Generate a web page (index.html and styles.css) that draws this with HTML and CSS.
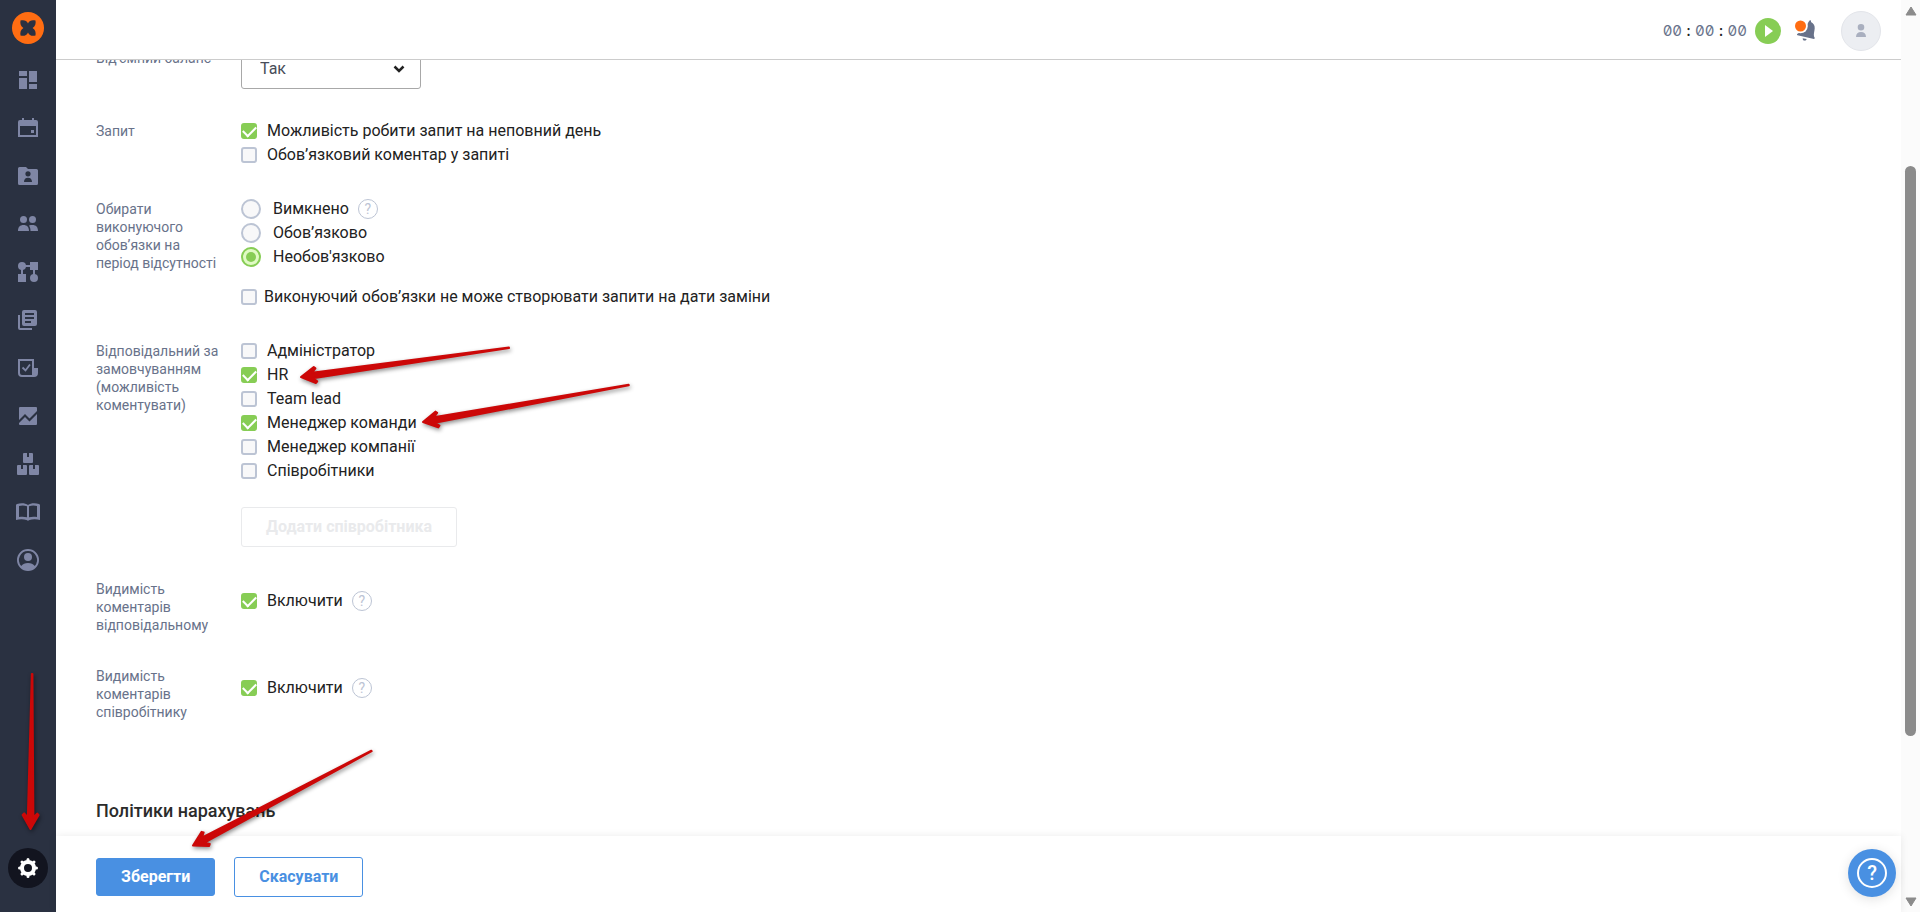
FILE: index.html
```html
<!DOCTYPE html>
<html lang="uk">
<head>
<meta charset="utf-8">
<title>Налаштування політики</title>
<link rel="stylesheet" href="styles.css">
</head>
<body>
<div class="app">
  <nav class="sidebar" aria-label="Головне меню">
    <a class="logo" href="#" aria-label="Головна">
      <svg viewBox="0 0 32 32" width="32" height="32"><circle cx="16" cy="16" r="16" fill="#ff6d12"/><path fill="#2a3141" d="M8.500 8.600C11.500 7.700 14.800 8.300 16 11.600 17.200 8.300 20.500 7.700 23.500 8.600 24 11.600 23.400 14.300 20.600 16 23.400 17.700 24 20.400 23.500 23.400 20.500 24.300 17.200 23.700 16 20.400 14.800 23.700 11.500 24.300 8.500 23.400 8 20.400 8.600 17.700 11.400 16 8.600 14.300 8 11.600 8.500 8.600z"/></svg>
    </a>
    <a class="nav-item" href="#" aria-label="Дашборд"><svg viewBox="0 0 24 24"><path d="M3 3h8v5H3zM3 10h8v11H3zM13 3h8v11h-8zM13 16h8v5h-8z"/></svg></a>
    <a class="nav-item" href="#" aria-label="Календар"><svg viewBox="0 0 24 24"><path fill-rule="evenodd" d="M6 2h2v2h8V2h2v2h2a2 2 0 0 1 2 2v15H2V6a2 2 0 0 1 2-2h2zM4 10v9h16v-9zM15 14h3v3h-3z"/></svg></a>
    <a class="nav-item" href="#" aria-label="Рекрутинг"><svg viewBox="0 0 24 24"><path fill-rule="evenodd" d="M3.500 3H10l2 2h8.500A1.500 1.500 0 0 1 22 6.500v13a1.500 1.500 0 0 1-1.500 1.500h-17A1.500 1.500 0 0 1 2 19.500v-15A1.500 1.500 0 0 1 3.500 3zM12 7.200a2.600 2.600 0 1 0 0 5.200 2.600 2.600 0 0 0 0-5.200zM8 18h8c0-2.700-1.500-4.200-4-4.200s-4 1.500-4 4.200z"/></svg></a>
    <a class="nav-item" href="#" aria-label="Команда"><svg viewBox="0 0 24 24"><circle cx="7.500" cy="7.500" r="3.500"/><circle cx="16.500" cy="7.500" r="3.500"/><path d="M2 19c0-4 2-6 5.500-6s5.500 2 5.500 6zM13 13.500c1-.4 2.500-.5 3.500-.5 3.500 0 5.500 2 5.500 6h-7.500c0-2.200-.5-4-1.500-5.500z"/></svg></a>
    <a class="nav-item" href="#" aria-label="Процеси"><svg viewBox="0 0 24 24"><circle cx="6" cy="6" r="4"/><circle cx="18" cy="18" r="4"/><path d="M14 2h8v8h-8zM2 14h8v8H2zM9 5h6v2H9zM5 9h2v6H5zM17 9h2v6h-2z"/></svg></a>
    <a class="nav-item" href="#" aria-label="Документи"><svg viewBox="0 0 24 24"><path fill-rule="evenodd" d="M8 2h11a2 2 0 0 1 2 2v12a2 2 0 0 1-2 2H8a2 2 0 0 1-2-2V4a2 2 0 0 1 2-2zM9 5v2h9V5zM9 9v2h9V9zM9 13v2h6v-2zM2 7h2v13h12v2H4a2 2 0 0 1-2-2z"/></svg></a>
    <a class="nav-item" href="#" aria-label="Опитування"><svg viewBox="0 0 24 24"><path fill-rule="evenodd" d="M2 3h16v9h4v5a4 4 0 0 1-4 4H6a4 4 0 0 1-4-4zM4 5v12a2 2 0 0 0 2 2h10V5z"/><path fill="none" stroke="#7f86a5" stroke-width="1.800" d="M6.500 11.500l3 3 4.500-6"/></svg></a>
    <a class="nav-item" href="#" aria-label="Звіти"><svg viewBox="0 0 24 24"><path d="M4 3h16a1 1 0 0 1 1 1v3l-7.500 7.500L9 10l-6 6V4a1 1 0 0 1 1-1z"/><path d="M3 19l6-6 4.500 4.500L21 10v10a1 1 0 0 1-1 1H4a1 1 0 0 1-1-1z"/></svg></a>
    <a class="nav-item" href="#" aria-label="Активи"><svg viewBox="0 0 24 24"><path d="M8 1h3v4h2V1h3a1 1 0 0 1 1 1v8a1 1 0 0 1-1 1H8a1 1 0 0 1-1-1V2a1 1 0 0 1 1-1zM2 13h3v4h2v-4h3a1 1 0 0 1 1 1v8a1 1 0 0 1-1 1H2a1 1 0 0 1-1-1v-8a1 1 0 0 1 1-1zM14 13h3v4h2v-4h3a1 1 0 0 1 1 1v8a1 1 0 0 1-1 1h-8a1 1 0 0 1-1-1v-8a1 1 0 0 1 1-1z"/></svg></a>
    <a class="nav-item" href="#" aria-label="База знань"><svg viewBox="0 0 24 24"><path fill-rule="evenodd" d="M12 5c2.500-2 7.500-2 11-1 .6.2 1 .5 1 1v15c-3.500-1-7.500-1-10.500 0l-1.500.8-1.500-.8c-3-1-7-1-10.500 0V5c0-.5.400-.8 1-1 3.500-1 8.500-1 11 1zM3 6v11c3-.6 5.500-.4 8 .2V6.300C8.500 5.300 5.500 5.300 3 6zM13 6.300v10.900c2.500-.6 5-.8 8-.2V6c-2.500-.7-5.500-.7-8 .3z"/></svg></a>
    <a class="nav-item" href="#" aria-label="Профіль"><svg viewBox="0 0 24 24"><path fill-rule="evenodd" d="M12 1a11 11 0 1 0 0 22 11 11 0 0 0 0-22zM12 3a9 9 0 0 1 6.800 14.900C17.300 16 15 15 12 15s-5.300 1-6.800 2.900A9 9 0 0 1 12 3z"/><circle cx="12" cy="9" r="4"/></svg></a>
    <a class="settings" href="#" aria-label="Налаштування"><svg viewBox="0 0 24 24" width="24" height="24"><circle cx="12" cy="12" r="6" fill="none" stroke="#fff" stroke-width="4"/><path stroke="#fff" stroke-width="3" stroke-linecap="round" d="M12 3.500V6M12 18v2.500M3.500 12H6M18 12h2.500M6 6l1.500 1.500M16.500 16.500L18 18M6 18l1.500-1.500M16.500 7.500L18 6"/></svg></a>
  </nav>

  <div class="page">
    <header class="topbar">
      <div class="timer"><span>00</span><b>:</b><span>00</span><b>:</b><span>00</span></div>
      <button class="play" type="button" aria-label="Запустити таймер"><svg viewBox="0 0 26 26" width="26" height="26"><path fill="#fff" d="M10 7l8 6-8 6z"/></svg></button>
      <button class="bell" type="button" aria-label="Сповіщення"><svg viewBox="0 0 24 24" width="24" height="24"><path fill="#68728a" d="M16.600 1.500c1-.5 1.700.3 1.400 1.500 2.700 1.300 4 3.600 3.700 6.500-.3 3.200-1.200 5.300-.7 8l.5.700c.2.800.3 1.700-.5 1.700L4.500 16.200c-.8-.3-.5-1.200 0-1.500l2.500-1.400c3.500-.4 6.500-2.500 7-5.600.3-2.500.800-4.200 2.600-6.200zM9.700 19.200l4 .9c-.5 1.300-1.300 1.700-2.300 1.500-1-.2-1.800-1-1.700-2.400z"/><circle cx="7.500" cy="7" r="7.300" fill="#fff"/><circle cx="7.500" cy="7" r="5.500" fill="#ff6d12"/></svg></button>
      <button class="avatar" type="button" aria-label="Мій профіль"><svg viewBox="0 0 14 14" width="14" height="14"><path fill="#a9afbf" d="M7 0a3.300 3.300 0 1 1 0 6.600A3.300 3.300 0 0 1 7 0zM2 13c0-3.300 2-5 5-5s5 1.700 5 5z"/></svg></button>
    </header>

    <main class="content">
      <form class="form" id="policy">
        <div class="row">
          <label class="caption" for="negative">Від’ємний баланс</label>
          <div class="select">
            <select id="negative"><option>Так</option><option>Ні</option></select>
            <svg viewBox="0 0 12 8" width="12" height="8"><path fill="none" stroke="#222" stroke-width="2.500" d="M1.500 1.500L6 6l4.500-4.500"/></svg>
          </div>
        </div>
        <div class="row">
          <div class="caption">Запит</div>
          <div class="options">
            <label class="option"><input type="checkbox" checked>Можливість робити запит на неповний день</label>
            <label class="option"><input type="checkbox">Обов’язковий коментар у запиті</label>
          </div>
        </div>
        <div class="row">
          <div class="caption">Обирати виконуючого обов’язки на період відсутності</div>
          <div class="options">
            <div class="line"><label class="option"><input type="radio" name="deputy">Вимкнено</label><button class="hint" type="button" aria-label="Підказка">?</button></div>
            <label class="option"><input type="radio" name="deputy">Обов’язково</label>
            <label class="option"><input type="radio" name="deputy" checked>Необов'язково</label>
            <label class="option option-extra"><input type="checkbox">Виконуючий обов’язки не може створювати запити на дати заміни</label>
          </div>
        </div>
        <div class="row">
          <div class="caption">Відповідальний за замовчуванням (можливість коментувати)</div>
          <div class="options">
            <label class="option"><input type="checkbox">Адміністратор</label>
            <label class="option"><input type="checkbox" checked>HR</label>
            <label class="option"><input type="checkbox">Team lead</label>
            <label class="option"><input type="checkbox" checked>Менеджер команди</label>
            <label class="option"><input type="checkbox">Менеджер компанії</label>
            <label class="option"><input type="checkbox">Співробітники</label>
            <button class="button button-disabled" type="button" disabled>Додати співробітника</button>
          </div>
        </div>
        <div class="row">
          <div class="caption">Видимість коментарів відповідальному</div>
          <div class="line line-low"><label class="option"><input type="checkbox" checked>Включити</label><button class="hint" type="button" aria-label="Підказка">?</button></div>
        </div>
        <div class="row">
          <div class="caption">Видимість коментарів співробітнику</div>
          <div class="line line-low"><label class="option"><input type="checkbox" checked>Включити</label><button class="hint" type="button" aria-label="Підказка">?</button></div>
        </div>
        <h2 class="heading">Політики нарахувань</h2>
      </form>
    </main>

    <footer class="actions">
      <button class="button button-primary" type="submit" form="policy">Зберегти</button>
      <button class="button button-outline" type="button">Скасувати</button>
      <button class="help" type="button" aria-label="Допомога"><span>?</span></button>
    </footer>
  </div>

  <div class="scrollbar" aria-hidden="true">
    <svg viewBox="0 0 12 10" width="12" height="10"><path fill="#8b8b8b" stroke="#8b8b8b" stroke-linejoin="round" d="M6 1l5 8H1z"/></svg>
    <div class="track"><div class="thumb"></div></div>
    <svg viewBox="0 0 12 10" width="12" height="10"><path fill="#8b8b8b" stroke="#8b8b8b" stroke-linejoin="round" d="M6 9l5-8H1z"/></svg>
  </div>

  <svg class="arrows" viewBox="0 0 1920 912" width="1920" height="912" aria-hidden="true">
    <g fill="#cc0808" stroke="#cc0808" stroke-width="2" stroke-linejoin="round">
      <path transform="translate(301 377) rotate(-8)" d="M0 0L14-8l1.500 1.500L11.500-2.800 210-.3v.6L11.500 2.800l4 3.700L14 8z"/>
      <path transform="translate(423 422) rotate(-10.200)" d="M0 0L14-8l1.500 1.500L11.500-2.800 209-.3v.6L11.500 2.800l4 3.700L14 8z"/>
      <path transform="translate(193 845.500) rotate(-27.900)" d="M0 0L14-8l1.500 1.500L11.500-2.800 202-.3v.6L11.500 2.800l4 3.700L14 8z"/>
      <path transform="translate(30.500 829) rotate(-89.400)" d="M0 0L14-8l1.500 1.500L11.500-2.800 155-.3v.6L11.500 2.800l4 3.700L14 8z"/>
    </g>
  </svg>
</div>
</body>
</html>
```
FILE: styles.css
```css
* { box-sizing: border-box; }

body {
  margin: 0;
  background: #fff;
  color: #222;
  font: 16px/24px Roboto, "Noto Sans", sans-serif;
}

button, select, input { font: inherit; margin: 0; }
button { padding: 0; border: 0; background: none; cursor: pointer; }

.app {
  position: relative;
  display: flex;
  height: 100vh;
  overflow: hidden;
}

/* Sidebar */
.sidebar {
  display: flex;
  flex-direction: column;
  flex: none;
  align-items: center;
  gap: 24px;
  width: 56px;
  padding: 12px 0 24px;
  background: #2a3141;
}
.sidebar svg { display: block; }
.nav-item { width: 24px; height: 24px; fill: #7f86a5; }
.settings {
  display: grid;
  place-items: center;
  width: 40px;
  height: 40px;
  margin-top: auto;
  border-radius: 50%;
  background: #12141f;
}

/* Page column */
.page {
  display: flex;
  flex: 1;
  flex-direction: column;
  min-width: 0;
}

.topbar {
  display: flex;
  flex: none;
  align-items: center;
  justify-content: flex-end;
  height: 60px;
  padding: 2px 20px 0 0;
  border-bottom: 1px solid #ccc;
}
.timer {
  display: flex;
  gap: 4px;
  margin-right: 8px;
  color: #68728a;
  font: 15px/20px Inter, sans-serif;
  font-feature-settings: "zero", "tnum";
}
.timer b { width: 5px; color: #222; font-weight: 500; text-align: center; }
.play { width: 26px; height: 26px; border-radius: 50%; background: #87cd55; }
.play svg, .bell svg { display: block; }
.bell { margin: 0 24px 0 12px; }
.avatar {
  display: grid;
  place-items: center;
  width: 40px;
  height: 40px;
  border: 1px solid #e3e5ea;
  border-radius: 50%;
  background: #eceef2;
}

.content { flex: 1; min-height: 0; overflow: hidden; }
.form {
  display: flex;
  flex-direction: column;
  gap: 30px;
  margin-top: -11px;
  padding: 0 40px;
}
.row {
  display: grid;
  grid-template-columns: 125px 1fr;
  gap: 20px;
  align-items: start;
}
.caption { padding-top: 3px; color: #68728a; font-size: 14px; line-height: 18px; }
.row:first-child .caption { padding-top: 0; }
.options { display: flex; flex-direction: column; align-items: flex-start; }
.line { display: flex; align-items: center; gap: 9px; }
.line-low { padding-top: 12px; }

.option { display: flex; align-items: center; gap: 10px; height: 24px; }
.option-extra { gap: 7px; margin-top: 16px; }
.option:has([type="radio"]) { gap: 12px; }

.option input {
  display: grid;
  place-items: center;
  appearance: none;
  width: 16px;
  height: 16px;
  border: 2px solid #bcc4d4;
  border-radius: 3px;
  background: #f8f8f9;
}
.option input[type="checkbox"]:checked { border-color: #87cd55; background: #87cd55; }
.option input[type="checkbox"]:checked::before {
  width: 11px;
  height: 6px;
  margin-bottom: 3px;
  border: solid #fff;
  border-width: 0 0 2px 2px;
  content: "";
  transform: rotate(-45deg);
}
.option input[type="radio"] { width: 20px; height: 20px; border-radius: 50%; }
.option input[type="radio"]:checked { border-color: #87cd55; background: #e0fac4; }
.option input[type="radio"]:checked::before {
  width: 10px;
  height: 10px;
  border-radius: 50%;
  background: #87cd55;
  content: "";
}

.hint {
  width: 20px;
  height: 20px;
  border: 1px solid #bcc4d4;
  border-radius: 50%;
  color: #bcc4d4;
  font-size: 14px;
  line-height: 18px;
}

.select { position: relative; width: 180px; }
.select select {
  display: block;
  appearance: none;
  width: 100%;
  height: 40px;
  padding: 0 18px;
  border: 1px solid #a8a8a8;
  border-radius: 3px;
  background: #fff;
  color: #484d59;
}
.select svg { position: absolute; top: 16px; right: 16px; pointer-events: none; }

.heading { margin: 48px 0 0; color: #2b2b2b; font-size: 18px; font-weight: 500; line-height: 24px; }

.button {
  height: 40px;
  padding: 0 24px;
  border: 1px solid #4990e2;
  border-radius: 3px;
  font-weight: 700;
}
.button-disabled {
  margin-top: 24px;
  border-color: #e9eaec;
  background: #fff;
  color: #e9eaec;
}
.button-primary { height: 38px; background: #4990e2; color: #fff; }
.button-outline { background: #fff; color: #4990e2; }

.actions {
  position: relative;
  display: flex;
  flex: none;
  align-items: center;
  gap: 19px;
  height: 76px;
  padding: 6px 5px 0 40px;
  background: #fff;
  box-shadow: 0 0 8px rgba(0, 0, 0, .08);
}
.help {
  display: grid;
  place-items: center;
  width: 48px;
  height: 48px;
  margin: 0 0 8px auto;
  border-radius: 50%;
  background: #4990e2;
  box-shadow: 0 2px 12px rgba(0, 0, 0, .12);
}
.help span {
  width: 30px;
  height: 30px;
  border: 2px solid #fff;
  border-radius: 50%;
  color: #fff;
  font-size: 20px;
  font-weight: 500;
  line-height: 26px;
}

/* Scrollbar */
.scrollbar {
  display: flex;
  flex: none;
  flex-direction: column;
  align-items: center;
  width: 19px;
  padding: 6px 0 5px;
  background: #fbfbfb;
}
.track { display: flex; flex: 1; flex-direction: column; align-items: center; width: 100%; padding-top: 150px; }
.thumb { width: 11px; height: 78%; border-radius: 6px; background: #8b8b8b; }

/* Pointer marks drawn over the page */
.arrows {
  position: absolute;
  top: 0;
  left: 0;
  filter: drop-shadow(1px 2px 2px rgba(0, 0, 0, .45));
  pointer-events: none;
}
```
